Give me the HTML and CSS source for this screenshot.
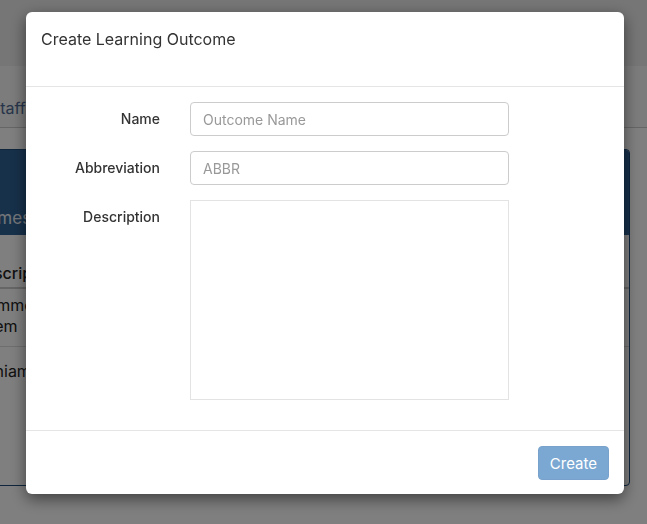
FILE: index.html
```html
<!DOCTYPE html>
<html lang="en">
<head>
<meta charset="utf-8">
<title>Create Learning Outcome</title>
<link rel="stylesheet" href="styles.css">
</head>
<body>
<div class="page">
  <div class="topbar"></div>
  <nav class="nav"><a class="nav-link" href="#">Staff</a></nav>
  <section class="card">
    <div class="card-head"><span class="card-title">Outcomes</span></div>
    <table class="table">
      <thead><tr><th>Description</th></tr></thead>
      <tbody>
        <tr class="row1"><td>Commodo<br>lorem</td></tr>
        <tr class="row2"><td>Veniam</td></tr>
      </tbody>
    </table>
  </section>
</div>
<div class="backdrop"></div>
<div class="modal">
  <div class="modal-header"><h4 class="modal-title">Create Learning Outcome</h4></div>
  <form class="modal-body">
    <label class="label" for="name">Name</label>
    <input class="input" id="name" type="text" placeholder="Outcome Name">
    <label class="label" for="abbr">Abbreviation</label>
    <input class="input" id="abbr" type="text" placeholder="ABBR">
    <label class="label" for="desc">Description</label>
    <textarea class="textarea" id="desc"></textarea>
  </form>
  <div class="modal-footer"><button class="btn" type="button" disabled>Create</button></div>
</div>
</body>
</html>
```
FILE: styles.css
```css
* { box-sizing: border-box; }
html, body { margin: 0; padding: 0; }
body {
  font-family: Inter, "Noto Sans", sans-serif;
  background: #fff;
  color: #333;
  width: 647px;
  height: 524px;
  overflow: hidden;
}
.page { width: 647px; }
.topbar { height: 66px; background: #ececec; }
.nav {
  height: 62px;
  background: #f8f8f8;
  border-bottom: 1px solid #ccc;
  padding-top: 32px;
  font-size: 16px;
  margin-bottom: 21px;
}
.nav-link { color: #4f6a94; text-decoration: none; margin-left: -10px; }
.card {
  width: 660px;
  margin-left: -30px;
  height: 337px;
  border: 1px solid #1d4b7a;
  border-radius: 0 4px 4px 4px;
  background: #fff;
}
.card-head {
  height: 85px;
  background: #2f6296;
  border-radius: 0 3px 0 0;
  padding-top: 58px;
  color: #e8eef5;
  font-size: 17px;
  white-space: nowrap;
}
.card-title { margin-left: -22px; }
.table { width: 100%; border-collapse: collapse; font-size: 16px; color: #222; }
.table th {
  text-align: left;
  font-weight: 500;
  height: 53px;
  padding: 23px 0 0 2px;
  border-bottom: 2px solid #ccc;
  white-space: nowrap;
}
.table td { padding: 6px 0 0 4px; line-height: 21px; vertical-align: top; }
.row1 td { height: 58px; border-bottom: 1px solid #ddd; }
.row2 td { height: 85px; padding-top: 14px; }
.backdrop {
  position: fixed;
  inset: 0;
  background: rgba(0, 0, 0, 0.5);
}
.modal {
  position: fixed;
  left: 26px;
  top: 12px;
  width: 598px;
  height: 482px;
  background: #fff;
  border-radius: 6px;
  box-shadow: 0 5px 15px rgba(0, 0, 0, 0.5);
  display: flex;
  flex-direction: column;
}
.modal-header {
  height: 75px;
  padding: 16px 15px 0;
  border-bottom: 1px solid #e5e5e5;
}
.modal-title {
  margin: 0;
  font-size: 16px;
  font-weight: 400;
  line-height: 22px;
  color: #333;
}
.modal-body {
  margin: 0;
  display: grid;
  grid-template-columns: 134px 319px;
  column-gap: 30px;
  row-gap: 15px;
  padding: 15px 0 30px;
  border-bottom: 1px solid #e5e5e5;
}
.label {
  text-align: right;
  font-size: 14px;
  font-weight: 500;
  line-height: 20px;
  padding-top: 7px;
  color: #333;
}
.input {
  height: 34px;
  border: 1px solid #ccc;
  border-radius: 4px;
  padding: 0 12px;
  font: 14px Inter, "Noto Sans", sans-serif;
  color: #555;
}
.input::placeholder { color: #999; }
.textarea {
  height: 200px;
  border: 1px solid #e3e3e3;
  border-radius: 0;
  resize: none;
  font: 14px Inter, "Noto Sans", sans-serif;
}
.modal-footer {
  flex: 1;
  display: flex;
  justify-content: flex-end;
  align-items: flex-start;
  padding: 15px 15px 0;
}
.btn {
  height: 34px;
  padding: 0 11px;
  background: #7aa8d2;
  border: 1px solid #78a2cb;
  border-radius: 4px;
  color: #fff;
  font: 15px Inter, "Noto Sans", sans-serif;
}
```
